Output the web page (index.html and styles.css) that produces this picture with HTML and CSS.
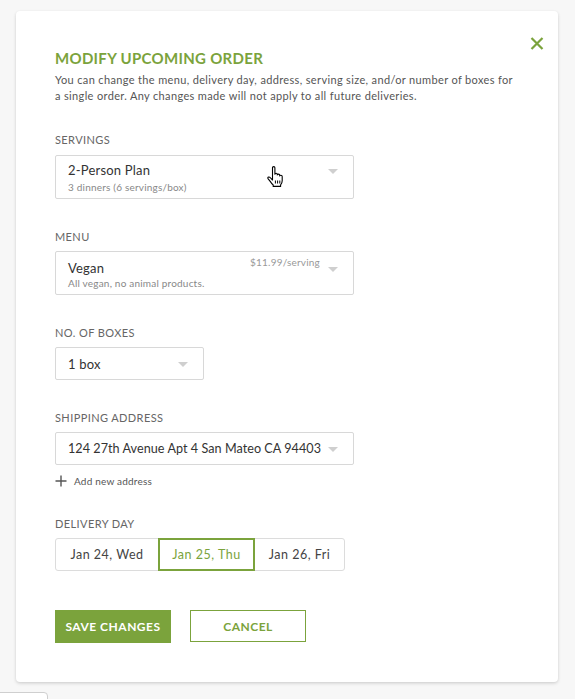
FILE: index.html
```html
<!DOCTYPE html>
<html>
<head>
<meta charset="utf-8">
<link rel="stylesheet" href="styles.css">
</head>
<body>
<div class="page">
  <div class="card">
    <button class="close" aria-label="Close">
      <svg width="14" height="13" viewBox="0 0 14 13"><path d="M1.5 1 L12.5 12 M12.5 1 L1.5 12" stroke="#7ba33c" stroke-width="2.2" fill="none"/></svg>
    </button>
    <h1 class="title">MODIFY UPCOMING ORDER</h1>
    <p class="desc">You can change the menu, delivery day, address, serving size, and/or number of boxes for a single order. Any changes made will not apply to all future deliveries.</p>

    <div class="field first">
      <div class="label">SERVINGS</div>
      <div class="select tall">
        <div class="row"><span class="main">2-Person Plan</span><span class="caret"></span></div>
        <div class="sub">3 dinners (6 servings/box)</div>
        <svg class="cursor" width="17" height="21" viewBox="0 0 17 21"><path d="M5.5 1.8 Q5.5 0.6 6.7 0.6 Q7.9 0.6 7.9 1.8 V8.2 Q7.9 7.2 9.1 7.2 Q10.3 7.2 10.3 8.4 V9 Q10.4 8.1 11.5 8.1 Q12.7 8.1 12.7 9.3 V10 Q12.8 9.2 13.9 9.2 Q15.2 9.2 15.2 10.6 V14.8 Q15.2 17.2 13.6 18.8 V20.4 H6.2 V19 Q4.6 17.6 3.2 15.4 L1 12.6 Q0.4 11.4 1.6 11.1 Q2.6 10.9 3.6 12 L5.5 14 Z" fill="#fff" stroke="#000" stroke-width="1.1" stroke-linejoin="round"/><path d="M8.4 14.5 V17.5 M10.6 14.5 V17.5 M12.8 14.5 V17.5" stroke="#000" stroke-width="1"/></svg>
      </div>
    </div>

    <div class="field">
      <div class="label">MENU</div>
      <div class="select tall menu">
        <div class="row"><span class="main">Vegan</span><span class="price">$11.99/serving</span><span class="caret"></span></div>
        <div class="sub">All vegan, no animal products.</div>
      </div>
    </div>

    <div class="field">
      <div class="label">NO. OF BOXES</div>
      <div class="select short narrow">
        <div class="row"><span class="main">1 box</span><span class="caret"></span></div>
      </div>
    </div>

    <div class="field">
      <div class="label">SHIPPING ADDRESS</div>
      <div class="select short">
        <div class="row"><span class="main address">124 27th Avenue Apt 4 San Mateo CA 94403</span><span class="caret"></span></div>
      </div>
      <div class="add">
        <svg width="12" height="12" viewBox="0 0 12 12"><path d="M6 0.5 V11.5 M0.5 6 H11.5" stroke="#555" stroke-width="1.4"/></svg>
        <span>Add new address</span>
      </div>
    </div>

    <div class="field after-add">
      <div class="label">DELIVERY DAY</div>
      <div class="days">
        <div class="day">Jan 24, Wed</div>
        <div class="day active">Jan 25, Thu</div>
        <div class="day">Jan 26, Fri</div>
      </div>
    </div>

    <div class="actions">
      <button class="btn primary">SAVE CHANGES</button>
      <button class="btn secondary">CANCEL</button>
    </div>
  </div>
  <div class="peek"></div>
</div>
</body>
</html>
```

FILE: styles.css
```css
* { box-sizing: border-box; }
html, body { margin: 0; padding: 0; }
body {
  background: #f7f7f7;
  font-family: "Lato", "Noto Sans", sans-serif;
  color: #333;
  overflow: hidden;
  height: 699px;
}
.page {
  padding: 11px 0 0 16px;
}
.card {
  position: relative;
  width: 542px;
  height: 671px;
  background: #fff;
  border-radius: 4px;
  box-shadow: 0 1px 3px rgba(0,0,0,0.12), 0 2px 4px rgba(0,0,0,0.06);
  padding: 37px 39px 0 39px;
}
.close {
  position: absolute;
  top: 26px;
  right: 14px;
  border: 0;
  background: none;
  padding: 0;
  width: 14px;
  height: 13px;
  display: block;
}
.close svg { display: block; }
.title {
  margin: 0;
  font-size: 15px;
  line-height: 20px;
  font-weight: 700;
  color: #7ba33c;
  letter-spacing: 0.3px;
}
.desc {
  margin: 4px 0 0;
  font-size: 11px;
  line-height: 16px;
  color: #555;
  letter-spacing: 0.35px;
  width: 465px;
}
.field { margin-top: 31px; }
.field.first { margin-top: 29px; }
.field.after-add { margin-top: 29px; }
.label {
  font-size: 11px;
  line-height: 14px;
  color: #666;
  letter-spacing: 0.4px;
  margin-bottom: 7px;
}
.field.first .label { margin-bottom: 8px; }
.select {
  position: relative;
  width: 299px;
  border: 1px solid #d8d8d8;
  border-radius: 2px;
  padding: 0 15px 0 12px;
  background: #fff;
}
.select.tall { height: 44px; padding-top: 6px; }
.select.menu { padding-top: 8px; }
.select.short { height: 33px; display: flex; align-items: center; }
.select.narrow { width: 149px; }
.row {
  display: flex;
  align-items: center;
  width: 100%;
  height: 16px;
}
.main {
  font-size: 13px;
  line-height: 16px;
  color: #333;
  letter-spacing: 0.2px;
  flex: 1;
  white-space: nowrap;
}
.main.address {
  font-size: 12.6px;
  letter-spacing: 0.05px;
}
.price {
  font-size: 10px;
  color: #999;
  letter-spacing: 0.2px;
  margin-right: 8px;
  align-self: flex-start;
  margin-top: -4px;
}
.caret {
  flex: none;
  width: 0;
  height: 0;
  border-left: 5.5px solid transparent;
  border-right: 5.5px solid transparent;
  border-top: 5px solid #cfcfcf;
  margin-top: 2px;
}
.sub {
  font-size: 10px;
  line-height: 14px;
  color: #888;
  margin-top: 2px;
  letter-spacing: 0.2px;
}
.select.menu .sub { margin-top: 0; }
.cursor {
  position: absolute;
  left: 211px;
  top: 10px;
}
.add {
  display: flex;
  align-items: center;
  margin-top: 9px;
  height: 14px;
  font-size: 10px;
  color: #555;
  letter-spacing: 0.2px;
}
.add svg { margin-right: 7px; }
.days {
  display: flex;
  width: 290px;
  height: 33px;
  border: 1px solid #dcdcdc;
  border-radius: 3px;
}
.day {
  display: flex;
  align-items: center;
  justify-content: center;
  font-size: 12.5px;
  color: #444;
  letter-spacing: 0.5px;
}
.day:nth-child(1) { width: 102px; }
.day:nth-child(2) { width: 97px; }
.day:nth-child(3) { flex: 1; }
.day.active {
  border: 2px solid #7ba33c;
  color: #7ba33c;
  margin: -1px 0;
}
.actions {
  display: flex;
  gap: 19px;
  margin-top: 39px;
}
.btn {
  height: 33px;
  width: 116px;
  font-family: "Lato", "Noto Sans", sans-serif;
  font-size: 12px;
  font-weight: 700;
  letter-spacing: 0.5px;
  border-radius: 0;
  padding: 0;
}
.btn.primary {
  background: #7ba33c;
  color: #fff;
  border: 0;
}
.btn.secondary {
  background: #fff;
  color: #7ba33c;
  border: 1px solid #7ba33c;
  height: 32px;
}
.peek {
  margin: 10px 0 0 -26px;
  width: 58px;
  height: 20px;
  border: 1px solid #cfcfcf;
  border-radius: 4px;
  background: #fff;
}
```
